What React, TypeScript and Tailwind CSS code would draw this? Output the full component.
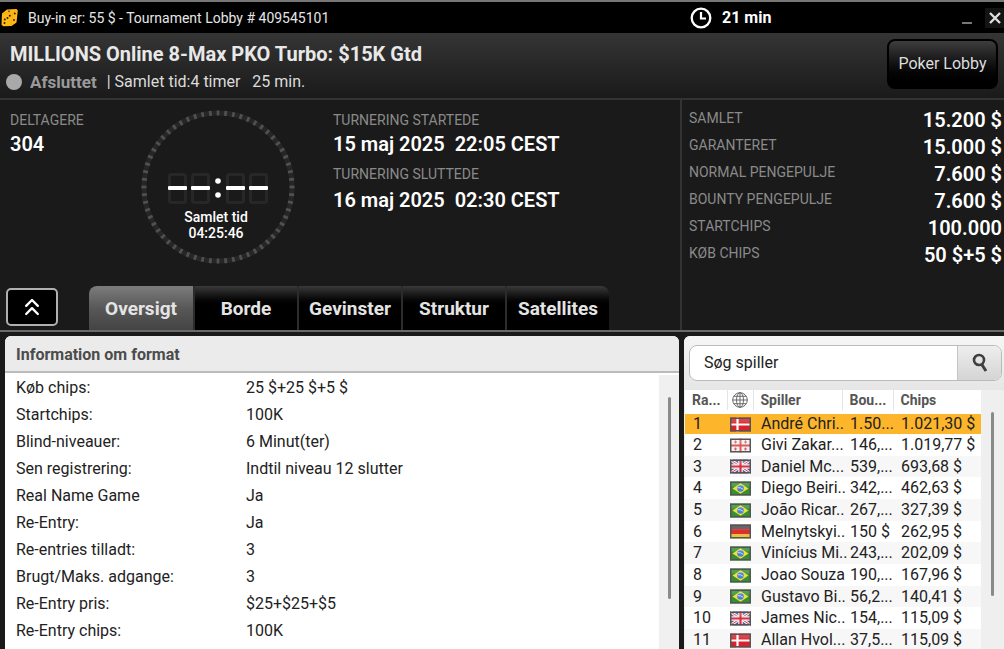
import React, { useState } from "react";
import { ChevronsUp } from "lucide-react";

type Country = "dk" | "ge" | "gb" | "br" | "de";

interface Player {
  rank: number;
  country: Country;
  name: string;
  bounty: string;
  chips: string;
}

const TABS = ["Oversigt", "Borde", "Gevinster", "Struktur", "Satellites"];

const TOTALS: [string, string][] = [
  ["SAMLET", "15.200 $"],
  ["GARANTERET", "15.000 $"],
  ["NORMAL PENGEPULJE", "7.600 $"],
  ["BOUNTY PENGEPULJE", "7.600 $"],
  ["STARTCHIPS", "100.000"],
  ["KØB CHIPS", "50 $+5 $"],
];

const FORMAT_INFO: [string, string][] = [
  ["Køb chips:", "25 $+25 $+5 $"],
  ["Startchips:", "100K"],
  ["Blind-niveauer:", "6 Minut(ter)"],
  ["Sen registrering:", "Indtil niveau 12 slutter"],
  ["Real Name Game", "Ja"],
  ["Re-Entry:", "Ja"],
  ["Re-entries tilladt:", "3"],
  ["Brugt/Maks. adgange:", "3"],
  ["Re-Entry pris:", "$25+$25+$5"],
  ["Re-Entry chips:", "100K"],
];

const PLAYERS: Player[] = [
  { rank: 1, country: "dk", name: "André Chri..", bounty: "1.50...", chips: "1.021,30 $" },
  { rank: 2, country: "ge", name: "Givi Zakar...", bounty: "146,...", chips: "1.019,77 $" },
  { rank: 3, country: "gb", name: "Daniel Mc...", bounty: "539,...", chips: "693,68 $" },
  { rank: 4, country: "br", name: "Diego Beiri..", bounty: "342,...", chips: "462,63 $" },
  { rank: 5, country: "br", name: "João Ricar..", bounty: "267,...", chips: "327,39 $" },
  { rank: 6, country: "de", name: "Melnytskyi..", bounty: "150 $", chips: "262,95 $" },
  { rank: 7, country: "br", name: "Vinícius Mi..", bounty: "243,...", chips: "202,09 $" },
  { rank: 8, country: "br", name: "Joao Souza", bounty: "190,...", chips: "167,96 $" },
  { rank: 9, country: "br", name: "Gustavo Bi..", bounty: "56,2...", chips: "140,41 $" },
  { rank: 10, country: "gb", name: "James Nic..", bounty: "154,...", chips: "115,09 $" },
  { rank: 11, country: "dk", name: "Allan Hvol...", bounty: "37,5...", chips: "115,09 $" },
];

function DiceLogo() {
  return (
    <svg viewBox="0 0 18 19" className="h-[19px] w-[18px] shrink-0">
      <path d="M2 5.500 7 1.500 16.500 1 17.800 2.500 16.500 14.500 11.500 18 3 18.300 1.500 16.500Z" fill="#ffb917" />
      <path d="M2 5.500 12.500 5 17 2M12.500 5 11.500 18" fill="none" stroke="#eda60c" strokeWidth="0.600" />
      <g fill="#2a1c00">
        <circle cx="4.500" cy="15" r="1" />
        <circle cx="4.800" cy="11.500" r="1" />
        <circle cx="7.500" cy="10" r="1" />
        <circle cx="9.800" cy="7.800" r="1" />
        <circle cx="14.800" cy="5.500" r="0.900" />
        <circle cx="14" cy="12" r="0.900" />
        <circle cx="9" cy="3.200" r="0.800" />
      </g>
    </svg>
  );
}

function ClockIcon() {
  return (
    <svg viewBox="0 0 22 22" className="size-[22px]" fill="none" stroke="#fff">
      <circle cx="11" cy="11" r="9.300" strokeWidth="2.300" />
      <path d="M11 5v6.500h5" strokeWidth="2.200" />
    </svg>
  );
}

function Flag({ country }: { country: Country }) {
  return (
    <svg viewBox="0 0 21 14" className="h-[15px] w-[21px]">
      {country === "dk" && (
        <>
          <rect width="21" height="14" fill="#d8222c" />
          <path d="M7.500 0v14M0 7h21" stroke="#fff" strokeWidth="2.200" />
        </>
      )}
      {country === "ge" && (
        <>
          <rect width="21" height="14" fill="#f4f0f0" />
          <path d="M10.500 0v14M0 7h21" stroke="#dc5a5a" strokeWidth="2" />
          <path
            d="M5.500 2v3M4 3.500h3M15.500 2v3M14 3.500h3M5.500 9v3M4 10.500h3M15.500 9v3M14 10.500h3"
            stroke="#dc5a5a"
            strokeWidth="1"
          />
        </>
      )}
      {country === "gb" && (
        <>
          <rect width="21" height="14" fill="#4a5ea6" />
          <path d="M0 0 21 14M21 0 0 14" stroke="#f2f2f6" strokeWidth="3" />
          <path d="M0 0 21 14M21 0 0 14" stroke="#d8404a" strokeWidth="1" />
          <path d="M10.500 0v14M0 7h21" stroke="#f6f2f4" strokeWidth="4.500" />
          <path d="M10.500 0v14M0 7h21" stroke="#d8303c" strokeWidth="2.200" />
        </>
      )}
      {country === "br" && (
        <>
          <rect width="21" height="14" fill="#35902f" />
          <path d="M10.500 1.800 18.500 7l-8 5.200L2.500 7Z" fill="#f0e03a" />
          <circle cx="10.500" cy="7" r="3.300" fill="#4a80dc" />
          <path d="M7.600 6.200q3-.6 5.600 1.600" fill="none" stroke="#dfe8f8" strokeWidth="0.900" />
        </>
      )}
      {country === "de" && (
        <>
          <rect width="21" height="5" fill="#4c4c4c" />
          <rect y="4.500" width="21" height="5" fill="#dc3030" />
          <rect y="9.500" width="21" height="4.500" fill="#e8c238" />
        </>
      )}
      <rect width="21" height="5" fill="#fff" opacity="0.150" />
      <rect x="0.750" y="0.750" width="19.500" height="12.500" fill="none" stroke="#555" strokeWidth="1.500" />
    </svg>
  );
}

function GlobeIcon() {
  return (
    <svg viewBox="0 0 16 16" className="size-4" fill="none" stroke="#6b6b6b" strokeWidth="1">
      <circle cx="8" cy="8" r="7.300" />
      <ellipse cx="8" cy="8" rx="3.500" ry="7.300" />
      <path d="M8 .7v14.600M.7 8h14.600M2 4.300h12M2 11.700h12" />
    </svg>
  );
}

function SearchIcon() {
  return (
    <svg viewBox="0 0 16 20" className="h-5 w-4" fill="none" stroke="#3f3f3f">
      <circle cx="7" cy="7" r="5" strokeWidth="2.600" />
      <path d="M9.800 11.500 14 18" strokeWidth="3" />
    </svg>
  );
}

// One dimmed seven-segment digit with only the middle bar lit.
function Digit({ x }: { x: number }) {
  return (
    <g>
      <rect x={x + 1.5} y="64.500" width="16" height="28" rx="1.500" fill="none" stroke="#272727" strokeWidth="3" />
      <rect x={x} y="76" width="19" height="4" rx="1" fill="#fff" />
    </g>
  );
}

function ClockDial() {
  return (
    <div className="grid size-[154px] shrink-0">
      <svg viewBox="0 0 154 154" className="col-start-1 row-start-1">
        <circle cx="77" cy="77" r="74" fill="none" stroke="#262626" strokeWidth="5" />
        <circle
          cx="77"
          cy="77"
          r="74"
          fill="none"
          stroke="#505050"
          strokeWidth="5"
          pathLength="60"
          strokeDasharray="0.360 0.640"
          strokeDashoffset="0.180"
        />
        <Digit x={27} />
        <Digit x={50} />
        <circle cx="77" cy="71" r="2.800" fill="#fff" />
        <circle cx="77" cy="85" r="2.800" fill="#fff" />
        <Digit x={85} />
        <Digit x={108} />
      </svg>
      <div className="col-start-1 row-start-1 pt-[99px] pr-1 text-center text-sm/4 font-medium text-white">
        <p>Samlet tid</p>
        <p>04:25:46</p>
      </div>
    </div>
  );
}

function TitleBar() {
  return (
    <div className="flex h-[33px] shrink-0 items-center border-t-2 border-[#777] bg-black text-white">
      <div className="flex flex-1 items-center gap-2.5">
        <DiceLogo />
        <span className="text-sm text-[#e6e6e6]">Buy-in er: 55 $ - Tournament Lobby # 409545101</span>
      </div>
      <div className="flex w-[314px] items-center">
        <ClockIcon />
        <span className="flex-1 pl-2.5 text-base font-bold">21 min</span>
        <button aria-label="Minimer" className="flex size-5 items-end justify-center pb-1">
          <span className="h-0.5 w-2.5 bg-[#777]" />
        </button>
        <button aria-label="Luk" className="ml-2 flex h-5 w-[19px] items-center justify-center bg-[#141414]">
          <svg viewBox="0 0 12 12" className="size-3" stroke="#ddd" strokeWidth="2.400">
            <path d="M1 1 11 11M11 1 1 11" />
          </svg>
        </button>
      </div>
    </div>
  );
}

function Header() {
  return (
    <header className="flex h-[67px] shrink-0 items-start justify-between border-b-2 border-[#333] bg-linear-to-b from-[#353535] to-[#1a1a1a] pr-1.5 pl-1.5">
      <div className="pt-[5px]">
        <h1 className="pl-1 text-xl/8 font-bold text-[#e8e8e8]">MILLIONS Online 8-Max PKO Turbo: $15K Gtd</h1>
        <div className="flex items-center text-base/6 text-[#dcdcdc]">
          <span className="size-4 rounded-full bg-[#a9a9a9]" />
          <span className="pl-2 text-[17px] font-bold text-[#9a9a9a]">Afsluttet</span>
          <span className="pl-2.5 whitespace-pre">| Samlet tid:4 timer   25 min.</span>
        </div>
      </div>
      <button className="mt-1.5 h-[50px] w-[111px] rounded-lg border-2 border-black bg-linear-to-b from-[#3e3e3e] to-black text-base text-[#ddd]">
        Poker Lobby
      </button>
    </header>
  );
}

function Summary({ active, onSelect }: { active: string; onSelect: (tab: string) => void }) {
  return (
    <section className="flex min-w-0 flex-1 flex-col justify-between">
      <div className="flex pt-2.5 pl-2.5">
        <div className="w-[131px]">
          <p className="text-sm/5 text-[#8a8a8a]">DELTAGERE</p>
          <p className="text-xl/7 font-semibold text-white">304</p>
        </div>
        <ClockDial />
        <div className="pl-[38px]">
          <p className="text-sm/5 text-[#8a8a8a]">TURNERING STARTEDE</p>
          <p className="text-xl/7 font-semibold whitespace-pre text-white">15 maj 2025  22:05 CEST</p>
          <p className="pt-1.5 text-sm/5 text-[#8a8a8a]">TURNERING SLUTTEDE</p>
          <p className="pt-0.5 text-xl/7 font-semibold whitespace-pre text-white">16 maj 2025  02:30 CEST</p>
        </div>
      </div>
      <div className="flex items-end pl-1.5">
        <button
          aria-label="Skjul"
          className="mb-1 flex h-[38px] w-[52px] items-center justify-center rounded-[5px] border-2 border-[#b0b0b0] bg-black text-white"
        >
          <ChevronsUp className="size-7" strokeWidth={2} />
        </button>
        <nav role="tablist" className="ml-[31px] flex">
          {TABS.map((tab) => (
            <button
              key={tab}
              role="tab"
              aria-selected={tab === active}
              onClick={() => onSelect(tab)}
              className={`h-11 w-[104px] pt-0.5 text-[19px] font-bold text-[#e4e4e4] first:rounded-tl-lg last:rounded-tr-lg ${
                tab === active
                  ? "bg-linear-to-b from-[#7c7c7c] via-[#585858] to-[#444]"
                  : "border-l-2 border-[#2c2c2c] bg-linear-to-b from-[#3a3a3a] to-black to-50%"
              }`}
            >
              {tab}
            </button>
          ))}
        </nav>
      </div>
    </section>
  );
}

function Totals() {
  return (
    <aside className="w-[324px] shrink-0 border-l-2 border-[#333] pt-1">
      <dl className="pr-0.5 pl-[7px]">
        {TOTALS.map(([label, value]) => (
          <div key={label} className="flex h-[27px] justify-between">
            <dt className="text-sm/7 text-[#8a8a8a]">{label}</dt>
            <dd className="text-xl/8 font-semibold text-white">{value}</dd>
          </div>
        ))}
      </dl>
    </aside>
  );
}

function FormatPanel() {
  return (
    <section className="flex min-w-0 flex-1 flex-col overflow-hidden rounded-t-md bg-white">
      <h2 className="h-[37px] shrink-0 border-b-2 border-[#bbb] bg-[#ebebeb] pl-[11px] text-base/[37px] font-bold text-[#4c4c4c]">
        Information om format
      </h2>
      <div className="flex min-h-0 flex-1">
        <dl className="flex-1 pt-px pl-[11px] text-base text-[#222]">
          {FORMAT_INFO.map(([label, value]) => (
            <div key={label} className="flex h-[27px] items-center">
              <dt className="w-[230px]">{label}</dt>
              <dd>{value}</dd>
            </div>
          ))}
        </dl>
        <div className="mt-0.5 w-5 bg-[#f0f0f0] pt-[22px]">
          <div className="mx-auto h-[202px] w-[3px] rounded-full bg-[#8a8a8a]" />
        </div>
      </div>
    </section>
  );
}

function PlayersPanel() {
  return (
    <section className="flex w-[320px] shrink-0 flex-col overflow-hidden rounded-tl-md bg-[#efefef]">
      <form
        className="flex h-[54px] shrink-0 items-center bg-linear-to-b from-[#f6f6f6] to-[#e6e6e6] pr-0.5 pl-[5px]"
        onSubmit={(e) => e.preventDefault()}
      >
        <div className="flex h-9 flex-1 overflow-hidden rounded-lg border border-[#bbb] bg-white">
          <input
            aria-label="Søg spiller"
            placeholder="Søg spiller"
            className="min-w-0 flex-1 pl-3.5 text-base text-[#222] outline-none placeholder:text-[#222]"
          />
          <button
            aria-label="Søg"
            className="flex w-11 items-center justify-center border-l border-[#c4c4c4] bg-linear-to-b from-[#eee] to-[#d4d4d4]"
          >
            <SearchIcon />
          </button>
        </div>
      </form>
      <div className="flex min-h-0 flex-1 pl-px">
        <div className="flex-1 overflow-hidden bg-white">
          <table className="w-full table-fixed border-collapse text-left text-base/5 text-[#222]">
            <colgroup>
              <col className="w-[42px]" />
              <col className="w-[26px]" />
              <col className="w-[89px]" />
              <col className="w-[51px]" />
              <col />
            </colgroup>
            <thead className="text-sm text-[#555]">
              <tr className="h-[22px] border-b border-[#ddd]">
                <th className="border-r border-[#e4e4e4] pl-[7px]">Ra...</th>
                <th aria-label="Land" className="border-r border-[#e4e4e4] pl-1">
                  <GlobeIcon />
                </th>
                <th className="border-r border-[#e4e4e4] pl-[7px]">Spiller</th>
                <th className="border-r border-[#e4e4e4] pl-[7px]">Bou...</th>
                <th className="pl-[7px]">Chips</th>
              </tr>
            </thead>
            <tbody className="border-t-4 border-white whitespace-nowrap">
              {PLAYERS.map((p) => (
                <tr
                  key={p.rank}
                  className={`h-[22px] nth-[3n]:h-[21px] ${
                    p.rank === 1 ? "bg-[#fdb62b]" : "odd:bg-[#f7f7f7]"
                  }`}
                >
                  <td className="pl-2">{p.rank}</td>
                  <td className="pl-[3px]">
                    <Flag country={p.country} />
                  </td>
                  <td className="pl-2">{p.name}</td>
                  <td className="pl-2">{p.bounty}</td>
                  <td className="pl-2">{p.chips}</td>
                </tr>
              ))}
            </tbody>
          </table>
        </div>
        <div className="w-[23px] pt-[22px] pl-2.5">
          <div className="h-[184px] w-[3px] rounded-full bg-[#8a8a8a]" />
        </div>
      </div>
    </section>
  );
}

export default function App() {
  const [tab, setTab] = useState("Oversigt");

  return (
    <div className="flex h-screen flex-col overflow-hidden bg-[#1a1a1a] font-['Roboto',sans-serif]">
      <TitleBar />
      <Header />
      <div className="flex h-[232px] shrink-0 border-b-2 border-[#6a6a6a]">
        <Summary active={tab} onSelect={setTab} />
        <Totals />
      </div>
      <main className="flex min-h-0 flex-1 gap-[5px] pt-1 pl-[5px]">
        <FormatPanel />
        <PlayersPanel />
      </main>
    </div>
  );
}
